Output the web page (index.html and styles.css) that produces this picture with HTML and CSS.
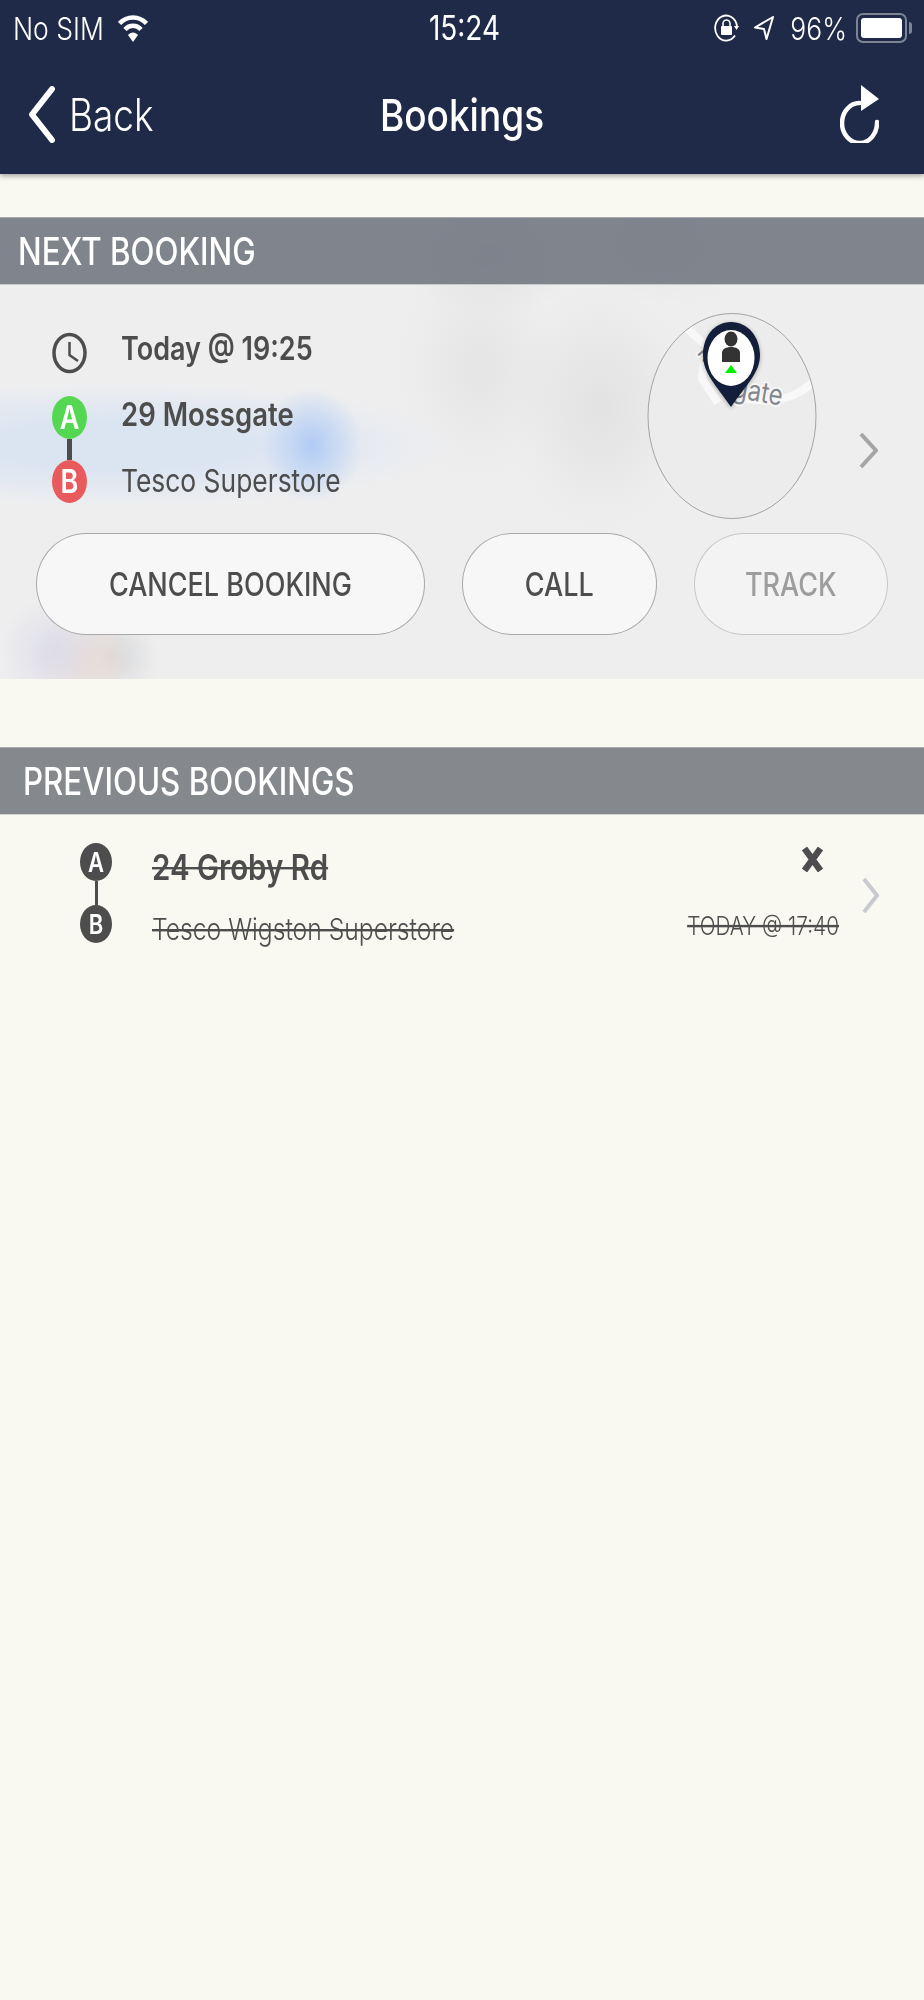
FILE: index.html
```html
<!DOCTYPE html>
<html lang="en">
<head>
    <meta charset="UTF-8">
    <meta name="viewport" content="width=device-width, initial-scale=1.0">
    <title>Bookings</title>
    <link rel="stylesheet" href="styles.css">
</head>
<body>
    <header class="topbar">
        <div class="status">
            <div class="status-left">
                <span class="tall">No SIM</span>
                <svg class="wifi" width="30" height="28" viewBox="0 0 30 28">
                    <path d="M1.500 9.500C9 1.500 21 1.500 28.500 9.500" fill="none" stroke="#fff" stroke-width="4.500"/>
                    <path d="M7 15.500C11.500 10.500 18.500 10.500 23 15.500" fill="none" stroke="#fff" stroke-width="4.500"/>
                    <path d="M10 21C12.500 17.500 17.500 17.500 20 21L15 28Z" fill="#fff"/>
                </svg>
            </div>
            <span class="tall status-time">15:24</span>
            <div class="status-right">
                <svg width="25" height="28" viewBox="0 0 25 28">
                    <path d="M21 21.500A11 12.500 0 1 1 23 12" fill="none" stroke="#fff" stroke-width="1.800"/>
                    <path d="M20 12H25L22.500 16Z" fill="#fff"/>
                    <rect x="7" y="12" width="11" height="9" rx="1" fill="#fff"/>
                    <path d="M9 12V9.500A3.500 3.500 0 0 1 16 9.500V12" fill="none" stroke="#fff" stroke-width="1.600"/>
                </svg>
                <svg class="arrow" width="20" height="24" viewBox="0 0 20 24">
                    <path d="M19 1L1 11.500L10 13L12.500 23Z" fill="none" stroke="#fff" stroke-width="2" stroke-linejoin="round"/>
                </svg>
                <span class="tall status-pct">96%</span>
                <div class="battery"><div class="battery-fill"></div></div>
            </div>
        </div>
        <nav class="nav">
            <a class="back" href="#">
                <svg width="27" height="57" viewBox="0 0 27 57">
                    <path d="M24 3L4 28.500L24 54" fill="none" stroke="#fff" stroke-width="6" stroke-linecap="round" stroke-linejoin="round"/>
                </svg>
                <span class="tall">Back</span>
            </a>
            <h1 class="nav-title"><span class="tall">Bookings</span></h1>
            <svg class="refresh" width="39" height="58" viewBox="0 0 39 58">
                <path d="M20 18A17.500 20 0 1 0 37 37" fill="none" stroke="#fff" stroke-width="4.500" stroke-linecap="round"/>
                <path d="M21 0L39 14L21 26Z" fill="#fff"/>
            </svg>
        </nav>
    </header>

    <section class="next">
        <h2 class="section-title next-title"><span class="tall">NEXT BOOKING</span></h2>
        <div class="next-body">
            <div class="next-top">
                <div class="route">
                    <div class="route-row">
                        <svg class="clock" width="35" height="42" viewBox="0 0 35 42">
                            <ellipse cx="17.500" cy="21" rx="15.500" ry="18.500" fill="none" stroke="#4d4d4d" stroke-width="3.500"/>
                            <path d="M17.500 10V23L26 29" fill="none" stroke="#4d4d4d" stroke-width="2.500"/>
                        </svg>
                        <span class="tall route-strong route-up">Today @ 19:25</span>
                    </div>
                    <div class="route-row">
                        <span class="stop stop-green stop-link"><span class="tall">A</span></span>
                        <span class="tall route-strong route-up-small">29 Mossgate</span>
                    </div>
                    <div class="route-row">
                        <span class="stop stop-red"><span class="tall">B</span></span>
                        <span class="tall route-light">Tesco Superstore</span>
                    </div>
                </div>
                <svg class="map" width="172" height="208" viewBox="0 0 172 208">
                    <defs>
                        <clipPath id="mapclip"><ellipse cx="86" cy="103" rx="84" ry="102.500"/></clipPath>
                    </defs>
                    <ellipse cx="86" cy="103" rx="84" ry="102.500" fill="#ececec"/>
                    <g clip-path="url(#mapclip)" fill="none" stroke="#f8f8f9" stroke-width="8">
                        <path d="M38 13L64 36"/>
                        <path d="M58 50L56 66L72 90"/>
                        <path d="M100 86C130 90 152 86 172 64"/>
                    </g>
                    <text class="map-road" transform="translate(86 84) rotate(10) scale(1 1.200)">gate</text>
                    <text class="map-road" transform="translate(50 40) rotate(50) scale(1 1.200)">M</text>
                    <ellipse cx="86" cy="103" rx="84" ry="102.500" fill="none" stroke="#a3a3a3" stroke-width="1"/>
                    <path class="pin" d="M85 9C102 9 114 24 114 42C114 60 100 72 85 94C70 72 57 60 57 42C57 24 68 9 85 9Z" fill="#131f3a"/>
                    <ellipse cx="85" cy="45" rx="23.500" ry="28" fill="#fff"/>
                    <ellipse cx="85" cy="26" rx="6.500" ry="7.500" fill="#333"/>
                    <path d="M76 49V40C76 36 80 34 85 34C90 34 94 36 94 40V49Z" fill="#333"/>
                    <path d="M85 52L91 60H79Z" fill="#00f000"/>
                </svg>
                <svg class="chevron" width="19" height="37" viewBox="0 0 19 37">
                    <path d="M2 2L17 18.500L2 35" fill="none" stroke="#a5a5a5" stroke-width="4"/>
                </svg>
            </div>
            <div class="actions">
                <button class="pill pill-cancel"><span class="tall">CANCEL BOOKING</span></button>
                <button class="pill pill-call"><span class="tall">CALL</span></button>
                <button class="pill pill-track"><span class="tall">TRACK</span></button>
            </div>
        </div>
    </section>

    <section class="previous">
        <h2 class="section-title prev-title"><span class="tall">PREVIOUS BOOKINGS</span></h2>
        <div class="prev-row">
            <div class="prev-stops">
                <span class="stop stop-dark"><span class="tall">A</span></span>
                <span class="prev-line"></span>
                <span class="stop stop-dark"><span class="tall">B</span></span>
            </div>
            <div class="prev-text">
                <span class="tall prev-from">24 Groby Rd</span>
                <span class="tall prev-to">Tesco Wigston Superstore</span>
            </div>
            <div class="prev-meta">
                <svg class="cross" width="21" height="25" viewBox="0 0 21 25">
                    <path d="M2.500 1.500L18.500 23.500M18.500 1.500L2.500 23.500" fill="none" stroke="#4d4d4d" stroke-width="6.500"/>
                </svg>
                <span class="tall prev-date">TODAY @ 17:40</span>
            </div>
            <svg class="prev-chevron" width="17" height="35" viewBox="0 0 17 35">
                <path d="M2 1L15 17.500L2 34" fill="none" stroke="#c9c9d0" stroke-width="4"/>
            </svg>
        </div>
    </section>
</body>
</html>
```

FILE: styles.css
```css
body {
    margin: 0;
    background-color: #f9f9f1;
    font-family: Inter, "Liberation Sans", sans-serif;
    color: #4d4d4d;
    min-height: 2000px;
}

/* the screenshot is a bit stretched, text too */
.tall {
    display: inline-block;
    transform: scaleY(1.2);
}

.topbar {
    background-color: #1e2a47;
    color: #fff;
    height: 174px;
    box-shadow: 0 2px 5px rgba(0, 0, 0, 0.35);
}

.status {
    display: grid;
    grid-template-columns: 1fr auto 1fr;
    align-items: center;
    height: 56px;
    font-size: 26.500px;
    line-height: 30px;
    font-weight: 300;
}

.status-left {
    display: flex;
    align-items: center;
    gap: 14px;
    padding-left: 13px;
}

.status-time {
    margin-left: 5px;
    font-size: 28px;
    font-weight: 400;
}

.status-right {
    display: flex;
    align-items: center;
    justify-content: flex-end;
    padding-right: 17px;
}

.arrow {
    margin-left: 15px;
}

.status-pct {
    margin-left: 16px;
}

.battery {
    position: relative;
    box-sizing: border-box;
    width: 51px;
    height: 30px;
    margin-left: 9px;
    padding: 3px;
    border: 2px solid #7d8494;
    border-radius: 7px;
}

.battery::after {
    content: "";
    position: absolute;
    top: 7px;
    right: -7px;
    width: 3px;
    height: 12px;
    background-color: #7d8494;
    border-radius: 0 3px 3px 0;
}

.battery-fill {
    height: 100%;
    background-color: #fff;
    border-radius: 3px;
}

.nav {
    display: grid;
    grid-template-columns: 1fr auto 1fr;
    align-items: center;
    height: 116px;
    padding: 0 28px;
}

.back {
    display: flex;
    align-items: center;
    gap: 14px;
    color: #fff;
    text-decoration: none;
    font-size: 37px;
    font-weight: 300;
}

.nav-title {
    margin: 0;
    font-size: 37px;
    font-weight: 500;
}

.refresh {
    justify-self: end;
    margin-right: 17px;
}

.section-title {
    margin: 0;
    color: #fff;
    font-size: 31.300px;
    font-weight: 500;
    height: 68px;
    line-height: 68px;
    box-sizing: border-box;
}

.next {
    margin-top: 43px;
    background-color: #eeeeef;
    background-image:
        radial-gradient(ellipse 50px 58px at 312px 228px, #b2ccf5 0%, rgba(178, 204, 245, 0) 100%),
        radial-gradient(ellipse 330px 62px at 120px 228px, #dbe5f2 40%, rgba(219, 229, 242, 0) 100%),
        radial-gradient(ellipse 55px 55px at 55px 435px, #dcdce8 0%, rgba(220, 220, 232, 0) 100%),
        radial-gradient(ellipse 50px 50px at 80px 445px, #eeded4 0%, rgba(238, 222, 212, 0) 100%),
        radial-gradient(ellipse 50px 45px at 110px 440px, #d6d7d8 0%, rgba(214, 215, 216, 0) 100%),
        radial-gradient(ellipse 90px 120px at 600px 190px, #e2e2e3 0%, rgba(226, 226, 227, 0) 100%),
        radial-gradient(ellipse 80px 110px at 480px 150px, #e5e5e6 0%, rgba(229, 229, 230, 0) 100%),
        radial-gradient(ellipse 90px 60px at 490px 40px, #e2e2e4 0%, rgba(226, 226, 228, 0) 100%),
        radial-gradient(ellipse 90px 60px at 660px 30px, #e6e6e7 0%, rgba(230, 230, 231, 0) 100%);
    background-repeat: no-repeat;
}

.next-title {
    padding-left: 18px;
    background-color: rgba(104, 108, 120, 0.82);
    border-top: 1px solid #a8aab0;
    border-bottom: 1px solid #c8c9cc;
}

.next-body {
    height: 394px;
    box-sizing: border-box;
    padding: 28px 36px 0;
}

.next-top {
    display: flex;
    align-items: flex-start;
    height: 206px;
}

.route {
    padding-top: 8px;
    padding-left: 16px;
}

.route-row {
    display: flex;
    align-items: center;
    gap: 34px;
    height: 64px;
    font-size: 27px;
}

.route-strong {
    font-weight: 600;
}

.route-up {
    margin-top: -10px;
}

.route-up-small {
    margin-top: -7px;
    font-size: 27.500px;
}

.route-light {
    margin-top: -2px;
    font-size: 26.400px;
    font-weight: 400;
}

.stop {
    position: relative;
    display: flex;
    align-items: center;
    justify-content: center;
    flex: none;
    width: 35px;
    height: 43px;
    border-radius: 50%;
    color: #fff;
    font-weight: 600;
    font-size: 27px;
}

.stop-green {
    background-color: #55d851;
}

.stop-red {
    background-color: #e85a5c;
}

.stop-link::after {
    content: "";
    position: absolute;
    top: 100%;
    left: 15px;
    width: 5px;
    height: 21px;
    background-color: #4d4d4d;
}

.map {
    margin-left: auto;
    margin-right: 41px;
}

.pin {
    filter: drop-shadow(0 1px 2px rgba(0, 0, 0, 0.3));
}

.map-road {
    font-size: 24px;
    fill: #85898e;
    stroke: #f8f8f9;
    stroke-width: 3px;
    paint-order: stroke;
}

.chevron {
    margin-top: 119px;
    margin-right: 10px;
}

.actions {
    display: flex;
    gap: 37px;
    margin-top: 14px;
}

.pill {
    height: 102px;
    padding: 0;
    border: 1px solid #a9a9a9;
    border-radius: 50px / 51px;
    background-color: #f7f7f7;
    color: #4d4d4d;
    font-family: inherit;
    font-size: 27px;
    font-weight: 500;
}

.pill-cancel {
    width: 390px;
}

.pill-call {
    width: 195px;
}

.pill-track {
    width: 195px;
    color: #9d9d9d;
    border-color: #c6c6c6;
    background-color: #f3f3f4;
}

.previous {
    margin-top: 68px;
}

.prev-title {
    padding-left: 23px;
    background-color: #85888d;
    border-top: 1px solid #a8aaad;
    border-bottom: 1px solid #d0d1d2;
}

.prev-row {
    display: flex;
    padding: 28px 45px 0 80px;
}

.prev-stops {
    display: flex;
    flex-direction: column;
    align-items: center;
}

.stop-dark {
    width: 32px;
    height: 38px;
    background-color: #4d4d4d;
    font-size: 22px;
}

.prev-line {
    width: 3px;
    height: 24px;
    background-color: #4d4d4d;
}

.prev-text {
    display: flex;
    flex-direction: column;
    align-items: flex-start;
    gap: 29px;
    margin-left: 40px;
    padding-top: 6px;
}

.prev-from {
    font-size: 29.500px;
    font-weight: 600;
    text-decoration: line-through;
    text-decoration-thickness: 2px;
}

.prev-to {
    font-size: 24.700px;
    font-weight: 300;
    text-decoration: line-through;
    text-decoration-thickness: 2px;
}

.prev-meta {
    display: flex;
    flex-direction: column;
    align-items: flex-end;
    margin-left: auto;
    padding-top: 4px;
}

.cross {
    margin-right: 16px;
}

.prev-date {
    margin-top: 41px;
    font-size: 20.800px;
    font-weight: 300;
    text-decoration: line-through;
    text-decoration-thickness: 2px;
}

.prev-chevron {
    margin-top: 35px;
    margin-left: 23px;
}
```
